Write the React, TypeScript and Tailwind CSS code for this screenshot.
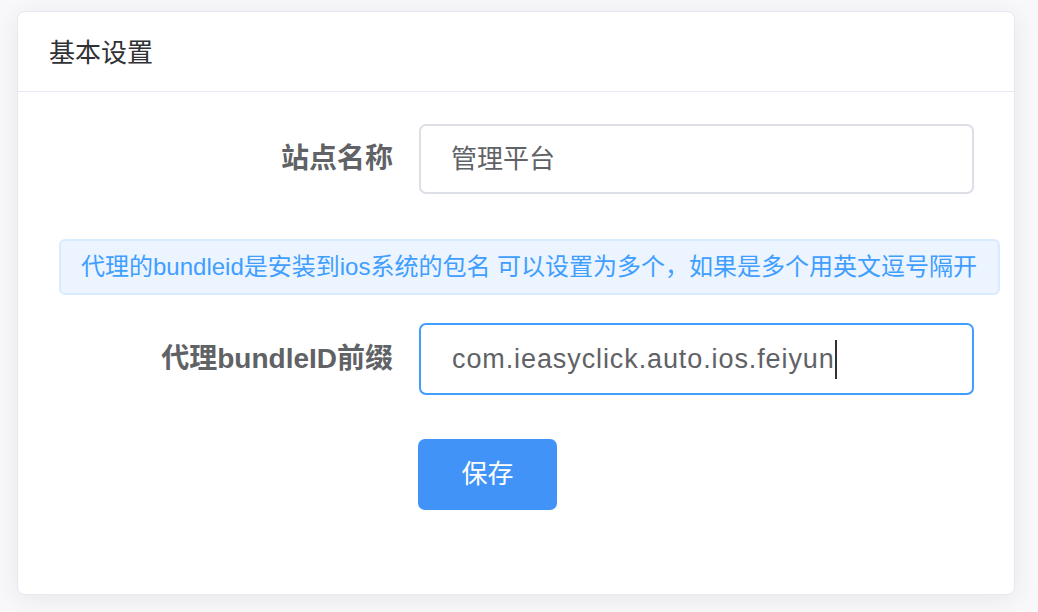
import React from "react";

const FONT = { fontFamily: '"Liberation Sans", "Noto Sans CJK SC", sans-serif' };

// ── 表单行 ─────────────────────────────────────────────────────────────────────

function FormRow({ label, children }: { label: string; children: React.ReactNode }) {
  return (
    <div className="flex items-center">
      <div className="w-[401px] shrink-0 pr-[26px] text-right text-[28px] font-bold text-[#606266]">
        {label}
      </div>
      {children}
    </div>
  );
}

export default function App() {
  return (
    <div className="min-h-screen bg-[#f8f8fa] pl-[17px] pt-[11px]" style={FONT}>
      <div className="w-[998px] h-[584px] rounded-[8px] border border-[#e6e9f3] bg-white shadow-[0_4px_24px_rgba(0,0,0,0.07)]">
        {/* ── 头部 ── */}
        <div className="h-[80px] flex items-center pt-[4px] px-[31px] border-b border-[#e6e9f3] text-[26px] text-[#303133]">
          基本设置
        </div>

        {/* ── 表单 ── */}
        <div className="pt-[32px]">
          <FormRow label="站点名称">
            <div className="w-[555px] h-[70px] flex items-center px-[30px] rounded-[7px] border-2 border-[#dcdfe6] text-[26px] text-[#606266]">
              管理平台
            </div>
          </FormRow>

          <div className="ml-[41px] mt-[45px] w-[941px] h-[56px] flex items-center px-[20px] rounded-[6px] border-2 border-[#d9ecff] bg-[#ebf4ff] text-[24px] text-[#409eff] whitespace-nowrap">
            代理的bundleid是安装到ios系统的包名 可以设置为多个，如果是多个用英文逗号隔开
          </div>

          <div className="mt-[28px]">
            <FormRow label="代理bundleID前缀">
              <div className="w-[555px] h-[72px] flex items-center px-[31px] rounded-[7px] border-2 border-[#409eff] text-[27px] text-[#606266]">
                <span className="tracking-[0.9px]">com.ieasyclick.auto.ios.feiyun</span>
                <span className="w-[2px] h-[39px] bg-[#303133]" />
              </div>
            </FormRow>
          </div>

          <button className="ml-[400px] mt-[44px] w-[139px] h-[71px] rounded-[7px] bg-[#4193f8] text-[26px] text-white">
            保存
          </button>
        </div>
      </div>
    </div>
  );
}
